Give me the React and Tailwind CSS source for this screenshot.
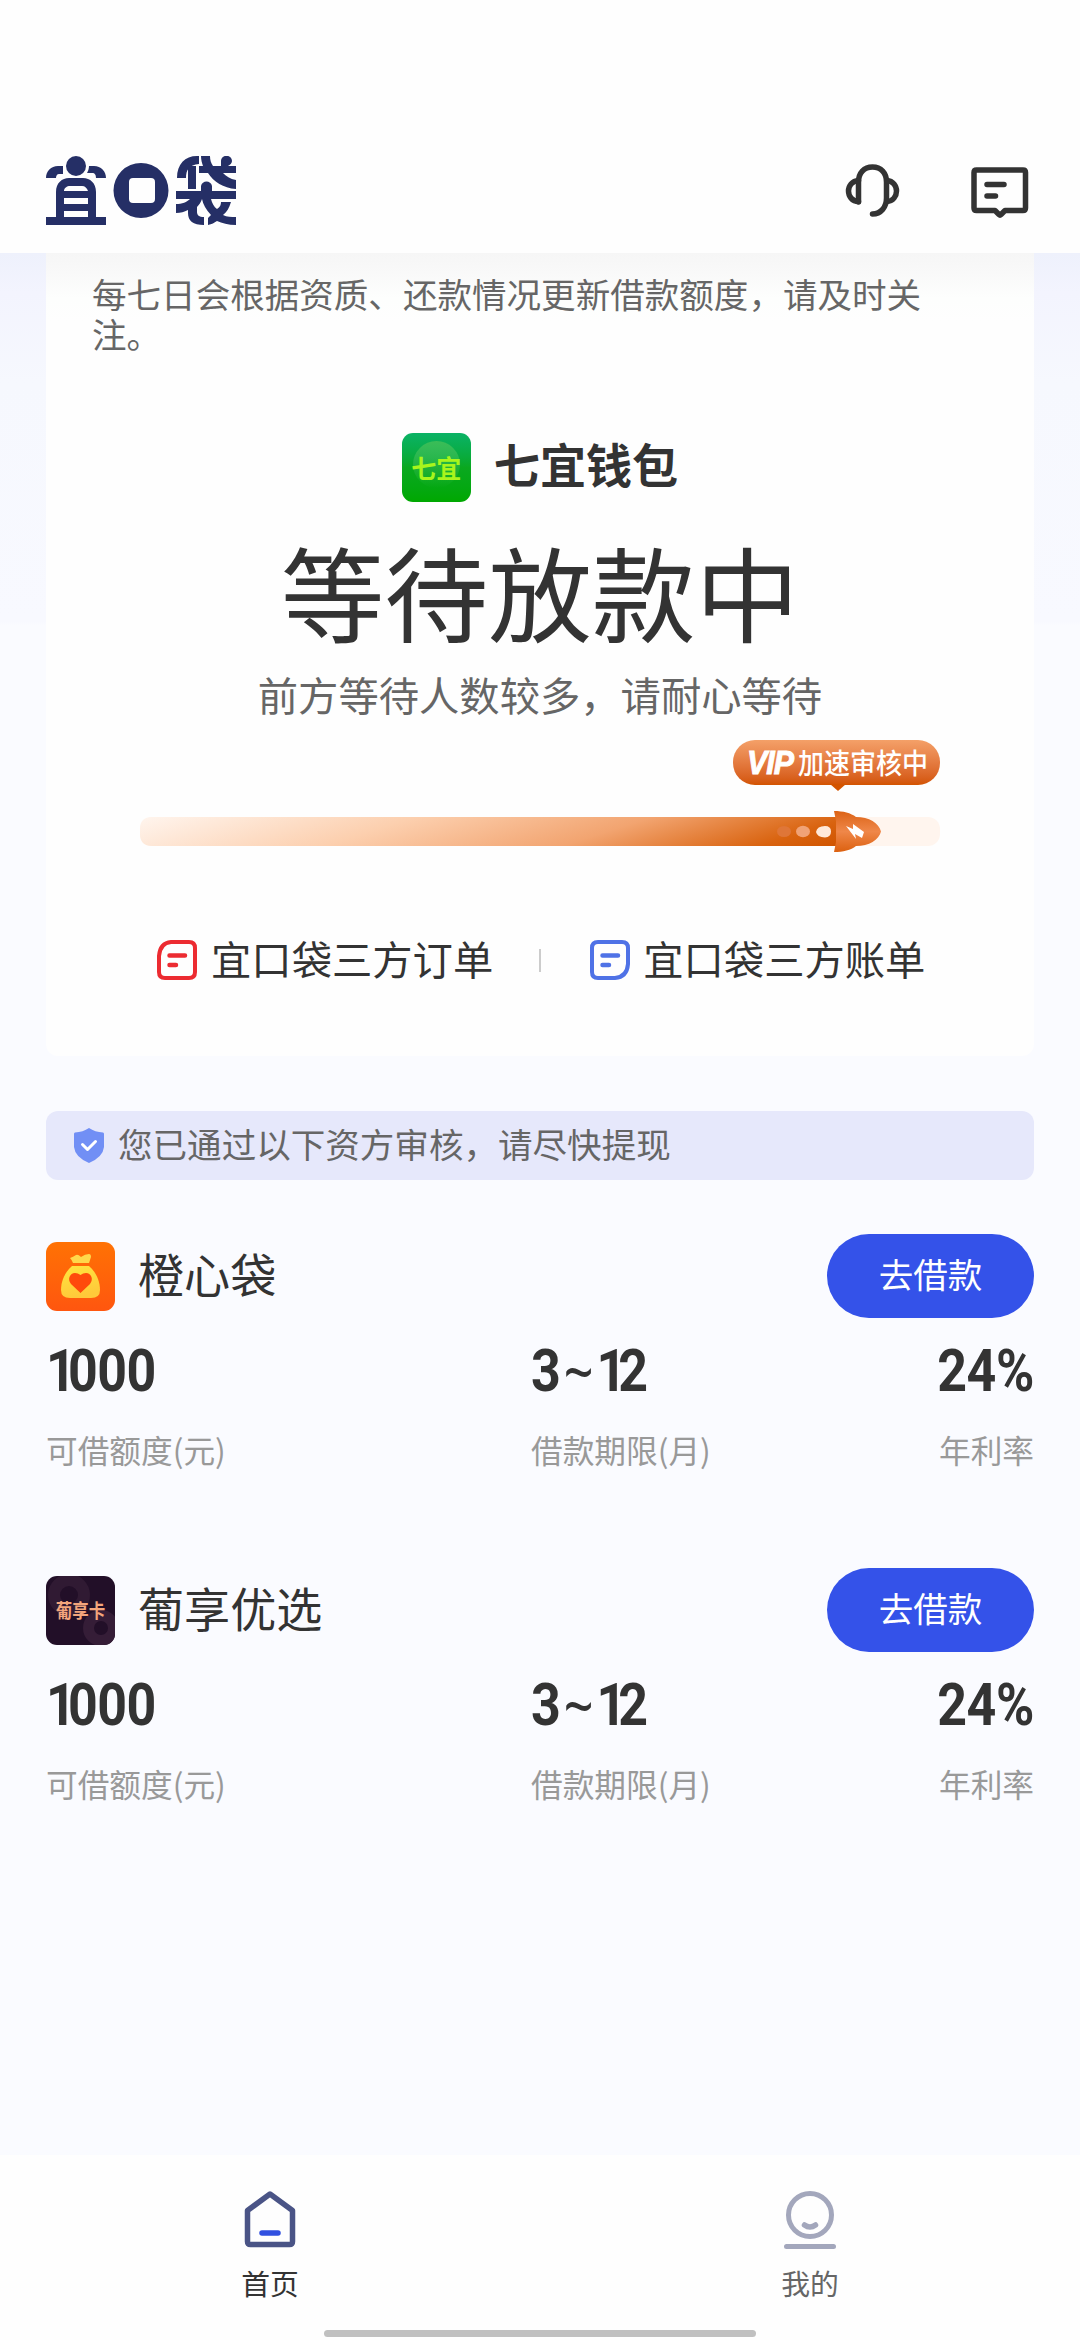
const products = [
  { name: "橙心袋", Icon: BagIcon },
  { name: "葡享优选", Icon: CardIcon },
];

function Logo() {
  return (
    <svg width="190" height="69" viewBox="0 0 190 69" className="block">
      <g fill="#252f66">
        <circle cx="30" cy="10" r="10" />
        <path d="M0 22C0 15 5 10 12 10H17V18H13C11 18 10 20 10 22Z" />
        <path d="M60 22C60 15 55 10 48 10H43C43 13 42 15 41 17H46C49 17 50 19 50 22Z" />
        <path fillRule="evenodd" d="M0 61H10V36C10 27 16 22 23 22H37C44 22 50 27 50 36V61H60V69H0ZM18 35H42C41 32 39 30 36 30H24C21 30 18 32 18 35ZM18 42V48H42V42ZM18 55V61H42V55Z" />
        <path fillRule="evenodd" d="M95 7A27.500 27.500 0 1 1 95 62A27.500 27.500 0 1 1 95 7ZM87 22Q83 22 83 26V43Q83 47 87 47H105Q109 47 109 43V26Q109 22 105 22Z" />
        <path d="M131 22C131 8 139 0 151 0H153V8C143 9 140 14 140 22Z" />
        <path d="M142 10H150V33H142Z" />
        <path d="M155 0H164C164 4 165 7 167 10H175V5C175 -2 186 -2 186 5C186 7 184 9 182 10H190V17H177C180 20 184 23 190 24V33C177 32 168 26 162 17H153V10H157C156 7 155 4 155 0Z" />
        <path d="M130 35H155V30C156 24 165 24 166 30V35H190V43H165C166 47 168 51 171 53C174 51 175 49 175 46H185C183 52 181 56 177 59C181 61 185 61 190 61V69C182 69 176 67 171 65C168 67 166 68 162 69V62L165 59C160 54 157 48 156 43C155 46 153 49 151 51V56C151 59 153 61 158 61V69C147 69 142 65 142 57V54C138 56 135 57 130 57V48C136 48 141 46 144 43H130Z" />
      </g>
    </svg>
  );
}

function HeadsetIcon() {
  return (
    <svg width="56" height="56" viewBox="0 0 56 56" fill="none" stroke="#333" strokeWidth="5.500" strokeLinecap="round" strokeLinejoin="round">
      <path d="M13.500 39V19C13.500 10 19 4 27.500 4S41.500 10 41.500 19V35C41.500 44 36 51 27.500 51" />
      <path d="M13.500 17.500C7 18 3.500 23 3.500 28S7 38.500 13.500 38.500" />
      <path d="M42 17.500C48 18 51.500 23 51.500 28S48 38.500 42 38.500" />
    </svg>
  );
}

function MessageIcon() {
  return (
    <svg width="58" height="52" viewBox="0 0 58 52" fill="none" stroke="#333" strokeWidth="5.500" strokeLinecap="round" strokeLinejoin="round">
      <path d="M5.500 3H52Q54.500 3 54.500 5.500V41Q54.500 43.500 52 43.500H34L30 47.500Q29 48.500 28 47.500L24 43.500H5.500Q3 43.500 3 41V5.500Q3 3 5.500 3Z" />
      <path d="M16 17.500H33M16 29H24.500" />
    </svg>
  );
}

function WalletIcon() {
  return (
    <div className="relative flex size-[69px] items-center justify-center overflow-hidden rounded-[11px] bg-linear-to-b from-[#0bb265] via-[#0aa81f] to-[#00a800]">
      <div className="absolute top-[8px] left-[11px] size-[47px] rounded-full bg-linear-to-b from-[#3bbd57] to-transparent" />
      <span className="relative text-[25px] leading-none font-bold text-[#a8f51c]">七宜</span>
    </div>
  );
}

function BagIcon() {
  return (
    <svg width="69" height="69" viewBox="0 0 69 69" className="block">
      <defs>
        <linearGradient id="bagBg" x1="0" y1="0" x2="0" y2="1">
          <stop offset="0" stopColor="#ff7204" />
          <stop offset="1" stopColor="#ff560f" />
        </linearGradient>
        <linearGradient id="bagBody" x1="0" y1="0" x2="0.300" y2="1">
          <stop offset="0" stopColor="#ffe53e" />
          <stop offset="1" stopColor="#ffc93a" />
        </linearGradient>
      </defs>
      <rect width="69" height="69" rx="11" fill="url(#bagBg)" />
      <path d="M24 16Q27 15 30 13Q32 12 35 15Q39 12 43 12Q45 12 45 15L43 21H27Q26 18 24 16Z" fill="#ffd84a" />
      <path d="M26 24H43C49 29 54 38 54 48Q54 56 45 56H24Q15 56 15 48C15 38 20 29 26 24Z" fill="url(#bagBody)" />
      <path d="M34.500 51L25 42C21 37 24 31 29 31Q32 31 34.500 33Q37 31 40 31C45 31 48 37 44 42Z" fill="#ff4a0c" />
    </svg>
  );
}

function CardIcon() {
  return (
    <div className="relative flex size-[69px] items-center justify-center overflow-hidden rounded-[11px] bg-[#220f28]">
      <div className="absolute top-[-2px] left-[2px] size-[42px] rounded-full border-[12px] border-[#301a33]" />
      <div className="absolute top-[34px] left-[37px] size-[36px] rounded-full border-[11px] border-[#351d37]" />
      <span className="relative scale-y-[1.150] text-[16.500px] leading-none font-bold text-[#f3a57c]">葡享卡</span>
    </div>
  );
}

function OrderIcon() {
  return (
    <svg width="42" height="42" viewBox="0 0 42 42" fill="none" stroke="#ec2b31" strokeWidth="4" strokeLinecap="round">
      <path d="M15 3H33Q39 3 39 9V33Q39 39 33 39H9Q3 39 3 33V17Q4 4 15 3Z" />
      <path d="M13.500 16.500H29M13.500 26H20" strokeWidth="4.500" />
    </svg>
  );
}

function BillIcon() {
  return (
    <svg width="42" height="42" viewBox="0 0 42 42" fill="none" stroke="#4f72e6" strokeWidth="4" strokeLinecap="round">
      <path d="M9 3H33Q39 3 39 9V25Q38 38 26 39H9Q3 39 3 33V9Q3 3 9 3Z" />
      <path d="M13.500 16.500H29M13.500 26H20" strokeWidth="4.500" />
    </svg>
  );
}

function ShieldIcon() {
  return (
    <svg width="30" height="35" viewBox="0 0 30 35" className="block">
      <path d="M15 0Q21 4 29 4.500Q30 4.500 30 6V19Q29 29 15 35Q1 29 0 19V6Q0 4.500 1 4.500Q9 4 15 0Z" fill="#718ff5" />
      <path d="M8.500 16.500L13.500 21.500L21.500 13.500" fill="none" stroke="#fff" strokeWidth="3" strokeLinecap="round" strokeLinejoin="round" />
    </svg>
  );
}

function ProgressBar() {
  return (
    <div className="relative mt-[26px] h-[41px] w-[800px]">
      <div className="absolute top-[6px] h-[29px] w-full rounded-[12px] bg-[#fff5ee]" />
      <svg width="745" height="41" viewBox="0 0 745 41" className="absolute top-0 left-0">
        <defs>
          <linearGradient id="bar" gradientUnits="userSpaceOnUse" x1="0" y1="6" x2="74" y2="236">
            <stop offset="0" stopColor="#fff5ee" />
            <stop offset="0.350" stopColor="#fccfae" />
            <stop offset="0.650" stopColor="#f2a470" />
            <stop offset="0.900" stopColor="#d9630f" />
            <stop offset="1" stopColor="#d05400" />
          </linearGradient>
          <linearGradient id="rocket" x1="0" y1="0" x2="0" y2="1">
            <stop offset="0" stopColor="#dc6316" />
            <stop offset="0.500" stopColor="#ef8749" />
            <stop offset="1" stopColor="#dc6110" />
          </linearGradient>
        </defs>
        <path d="M12 6H700V35H12Q0 35 0 23V18Q0 6 12 6Z" fill="url(#bar)" />
        <ellipse cx="644" cy="20.500" rx="7" ry="5.500" fill="#df7638" />
        <ellipse cx="663" cy="20.500" rx="7" ry="5.700" fill="#f0a276" />
        <path d="M676 21Q677 15 685 15Q691 15 691 20.500T685 26.500Q677 26 676 21Z" fill="#ffe8d8" />
        <path d="M694 0C703 0 711 2 716 6C729 6 739 12 741 20.500C739 29 729 35 716 35C711 39 703 41 694 41L696 31V10Z" fill="url(#rocket)" />
        <path d="M706 15L713 18L713 13L724 21L722 27L715 23L716 28Z" fill="#fff" />
      </svg>
    </div>
  );
}

function NumberText({ value }) {
  return value.split(/([1~])/).filter(Boolean).map((part, i) => {
    if (part === "1") return <span key={i} className="tracking-[-9px]">1</span>;
    if (part === "~") return <span key={i} className="w-[41px] text-center font-['Noto_Sans'] font-medium">~</span>;
    return <span key={i}>{part}</span>;
  });
}

function Stat({ value, label, className, origin }) {
  return (
    <div className={className}>
      <div className={`flex h-[60px] w-max font-[Roboto] text-[59px] leading-[60px] font-bold tracking-[-0.500px] scale-x-[0.880] ${origin}`}>
        <NumberText value={value} />
      </div>
      <div className="mt-[25px] text-[31.680px] leading-[46px] text-[#999]">{label}</div>
    </div>
  );
}

function Product({ name, Icon }) {
  return (
    <section className="h-[334px]">
      <div className="flex h-[84px] items-center">
        <Icon />
        <h2 className="ml-[23px] pb-[7px] text-[46.080px] leading-[60px] font-normal">{name}</h2>
        <button className="ml-auto h-[84px] w-[207px] rounded-full bg-[#3452e9] pb-[7px] text-[34.560px] leading-[50px] text-white">去借款</button>
      </div>
      <div className="mt-[23px] flex">
        <Stat value="1000" label="可借额度(元)" className="w-[485px]" origin="origin-left" />
        <Stat value="3~12" label="借款期限(月)" className="flex-1" origin="origin-left" />
        <Stat value="24%" label="年利率" className="flex flex-col items-end" origin="origin-right" />
      </div>
    </section>
  );
}

export default function App() {
  return (
    <div className="flex h-[2340px] w-[1080px] flex-col overflow-hidden bg-[#fafbff] font-['Noto_Sans_CJK_SC',sans-serif] text-[#333]">
      <header className="flex h-[253px] shrink-0 items-start bg-[#fefefe] pt-[156px] pl-[46px]">
        <Logo />
        <div className="mt-[7px] ml-[609px]"><HeadsetIcon /></div>
        <div className="mt-[11px] ml-[70px]"><MessageIcon /></div>
      </header>

      <main className="flex-1 bg-[linear-gradient(#eef1fc,#f3f4fe_40px,#f6f8fe_130px,#f8f9ff_368px,#fafbff_372px)] px-[46px]">
        <div className="flex h-[803px] flex-col items-center rounded-b-[12px] bg-[linear-gradient(#f6f6f6,#f9f9f9_20px,#fdfefd_45px,#fefefe_70px)] pt-[20px]">
          <p className="self-start pr-[80px] pl-[46px] text-[34.560px] leading-[40px] text-[#666]">每七日会根据资质、还款情况更新借款额度，请及时关<br />注。</p>
          <div className="mt-[80px] flex items-center gap-[23px]">
            <WalletIcon />
            <span className="pb-[9px] text-[46.080px] leading-[60px] font-bold">七宜钱包</span>
          </div>
          <h1 className="mt-[28px] text-[103.680px] leading-[120px] font-normal">等待放款中</h1>
          <p className="mt-[14px] text-[40.320px] leading-[60px] text-[#666]">前方等待人数较多，请耐心等待</p>
          <div className="relative mt-[16px] mr-[94px] flex h-[45px] w-[207px] items-center self-end rounded-[22px] bg-linear-to-b from-[#f4a068] to-[#d35400] pl-[14px] text-white">
            <span className="w-[51px] origin-left scale-x-[0.920] font-['Liberation_Sans'] text-[33px] leading-none font-bold tracking-[-1px] italic [-webkit-text-stroke:1px_white]">VIP</span>
            <span className="scale-y-[1.080] pb-[2px] text-[26px] leading-none font-medium whitespace-nowrap">加速审核中</span>
            <svg width="16" height="7" viewBox="0 0 16 7" className="absolute top-[44px] left-[97px]"><path d="M0 0H16L8 7Z" fill="#d35400" /></svg>
          </div>
          <ProgressBar />
          <div className="mt-[78px] flex h-[60px] w-full items-center pl-[110px]">
            <OrderIcon />
            <span className="ml-[13px] pb-[5px] text-[40.320px] leading-[60px]">宜口袋三方订单</span>
            <div className="ml-[46px] h-[23px] w-[2px] bg-[#ccc]" />
            <div className="ml-[48px]"><BillIcon /></div>
            <span className="ml-[12px] pb-[5px] text-[40.320px] leading-[60px]">宜口袋三方账单</span>
          </div>
        </div>

        <div className="mt-[55px] flex h-[69px] items-center rounded-[12px] bg-[#e6e8fb] pl-[28px]">
          <ShieldIcon />
          <span className="ml-[14px] pb-[6px] text-[34.560px] leading-[50px] text-[#666]">您已通过以下资方审核，请尽快提现</span>
        </div>

        <div className="mt-[54px]">
          {products.map((p) => <Product key={p.name} {...p} />)}
        </div>
      </main>

      <nav className="relative grid h-[185px] shrink-0 grid-cols-2 bg-[#fefefe] text-[28.800px] leading-[40px]">
        <div className="flex flex-col items-center pt-[36px]">
          <svg width="52" height="57" viewBox="0 0 52 57" fill="none" strokeLinecap="round" strokeLinejoin="round">
            <path d="M26 3L48.500 19.500V50.500Q48.500 53.500 45.500 53.500H6.500Q3.500 53.500 3.500 50.500V19.500Z" stroke="#4a5486" strokeWidth="5.500" />
            <path d="M18 42H34" stroke="#3150e0" strokeWidth="5.500" />
          </svg>
          <span className="mt-[15px]">首页</span>
        </div>
        <div className="flex flex-col items-center pt-[36px] text-[#666]">
          <svg width="52" height="59" viewBox="0 0 52 59" fill="none" stroke="#a3a7bc" strokeWidth="5" strokeLinecap="round">
            <circle cx="26" cy="24" r="21.500" />
            <path d="M20.500 34Q26 38 31.500 34" strokeWidth="5.500" />
            <path d="M2.500 55.500H49.500" />
          </svg>
          <span className="mt-[13px]">我的</span>
        </div>
        <div className="absolute top-[175px] left-[324px] h-[7px] w-[432px] rounded-full bg-[#c0c0c0]" />
      </nav>
    </div>
  );
}
